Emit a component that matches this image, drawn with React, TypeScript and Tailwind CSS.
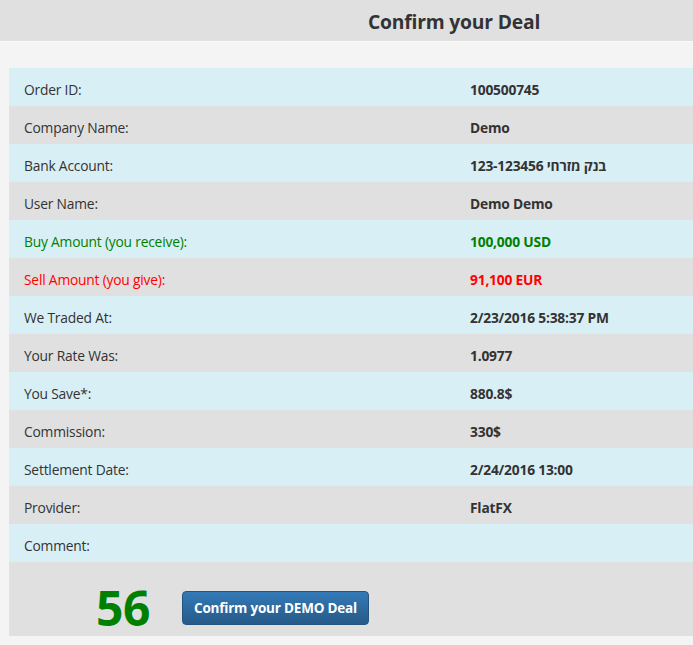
import React from "react";

const rows: { label: string; value: string; tone?: "green" | "red" }[] = [
  { label: "Order ID:", value: "100500745" },
  { label: "Company Name:", value: "Demo" },
  { label: "Bank Account:", value: "123-123456 בנק מזרחי" },
  { label: "User Name:", value: "Demo Demo" },
  { label: "Buy Amount (you receive):", value: "100,000 USD", tone: "green" },
  { label: "Sell Amount (you give):", value: "91,100 EUR", tone: "red" },
  { label: "We Traded At:", value: "2/23/2016 5:38:37 PM" },
  { label: "Your Rate Was:", value: "1.0977" },
  { label: "You Save*:", value: "880.8$" },
  { label: "Commission:", value: "330$" },
  { label: "Settlement Date:", value: "2/24/2016 13:00" },
  { label: "Provider:", value: "FlatFX" },
  { label: "Comment:", value: "" },
];

export default function App() {
  return (
    <div
      className="min-h-[645px] w-[693px] overflow-hidden bg-[#f4f4f4] text-[#333333]"
      style={{ fontFamily: "'Open Sans', 'Noto Sans', sans-serif" }}
    >
      <div className="flex h-[42px] items-center border-b border-[#fafafa] bg-[#e0e0e0] pl-[368px] pt-[3px]">
        <h1 className="whitespace-nowrap text-[19.3px] font-bold tracking-[-0.2px] text-[#333333]">
          Confirm your Deal
        </h1>
      </div>
      <div className="ml-[9px] mt-[26px] w-[700px]">
        {rows.map((r, i) => {
          const bg = i % 2 === 0 ? "bg-[#d9eff6]" : "bg-[#e0e0e0]";
          const tone =
            r.tone === "green"
              ? "text-[#008000]"
              : r.tone === "red"
              ? "text-[#ff0000]"
              : "text-[#333333]";
          return (
            <div key={i} className={`flex h-[38px] items-center pt-[7px] ${bg}`}>
              <div className={`w-[461px] pl-[15px] text-[13.8px] tracking-[-0.2px] ${tone}`}>
                {r.label}
              </div>
              <div
                className={`text-[13.8px] font-bold tracking-[-0.2px] ${tone}`}
                dir="ltr"
              >
                {r.value}
              </div>
            </div>
          );
        })}
        <div className="flex h-[74px] items-center bg-[#e0e0e0] pt-[18px]">
          <div className="w-[173px] pl-[87px] text-[48px] font-bold leading-none tracking-[-0.5px] text-[#008000]">
            56
          </div>
          <button className="h-[34px] w-[187px] rounded-[4px] border border-[#245580] bg-gradient-to-b from-[#337ab7] to-[#265a88] text-[13.5px] font-bold tracking-[-0.2px] text-white">
            Confirm your DEMO Deal
          </button>
        </div>
      </div>
    </div>
  );
}
